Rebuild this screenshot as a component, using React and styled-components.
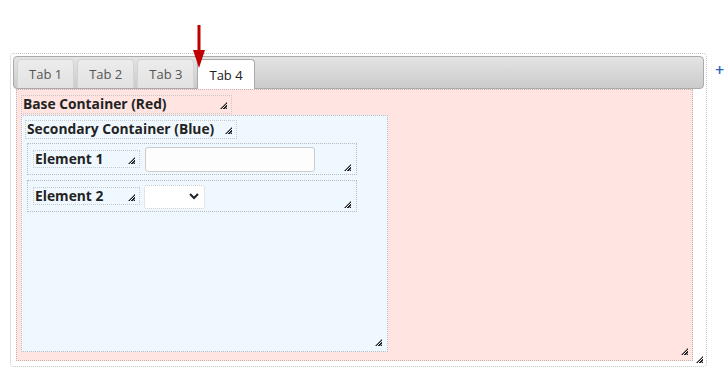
import styled, { createGlobalStyle, css } from "styled-components";

const GlobalStyle = createGlobalStyle`
  html, body {
    margin: 0;
    background: #fff;
    font-family: "Open Sans", "Liberation Sans", sans-serif;
  }
`;

//asa de redimensionar (esquina inferior derecha)
const grip = css`
  &::after {
    content: "";
    position: absolute;
    right: ${(props) => props.gr ?? 4}px;
    bottom: ${(props) => props.gb ?? 4}px;
    width: 7px;
    height: 7px;
    background: repeating-linear-gradient(
      -45deg,
      #222 0 1px,
      #aaa 1px 1.5px,
      transparent 1.5px 2px
    );
    clip-path: polygon(100% 0, 100% 100%, 0 100%);
  }
`;

//Estructura de la pagina
const Page = styled.div`
  position: relative;
  display: flex;
  align-items: flex-start;
  padding: 53px 0 0 10px;
  height: 380px;
  box-sizing: border-box;
`;

const Arrow = styled.svg`
  position: absolute;
  left: 192px;
  top: 25px;
  z-index: 2;
`;

const Tabs = styled.div`
  position: relative;
  box-sizing: border-box;
  width: 697px;
  height: 314px;
  border: 1px dotted #c4c4c4;
  border-radius: 4px;
  padding: 2px;
  ${grip}
`;

const TabBar = styled.ul`
  display: flex;
  align-items: flex-end;
  gap: 3px;
  box-sizing: border-box;
  height: 33px;
  margin: 0;
  padding: 0 3px;
  list-style: none;
  border: 1px solid #aaa;
  border-radius: 4px;
  background: linear-gradient(#e4e4e4, #cbcbcb);
`;

const Tab = styled.li`
  box-sizing: border-box;
  height: ${(props) => (props.active ? "30px" : "29px")};
  margin-bottom: ${(props) => (props.active ? "-1px" : "0")};
  padding: 0 11px;
  display: flex;
  align-items: center;
  font-size: 13px;
  color: ${(props) => (props.active ? "#212121" : "#555")};
  background: ${(props) =>
    props.active ? "#fff" : "linear-gradient(#ececec, #e2e2e2)"};
  border: 1px solid ${(props) => (props.active ? "#aaa" : "#d3d3d3")};
  border-bottom: 0;
  border-radius: 4px 4px 0 0;
`;

const Panel = styled.div`
  position: relative;
  box-sizing: border-box;
  display: flex;
  flex-direction: column;
  align-items: flex-start;
  gap: 1px;
  width: 677px;
  height: 272px;
  margin-left: 3px;
  padding: 5px 0 0 4px;
  background: #ffe4e1;
  border: 1px dotted #c4b4b2;
  ${grip}
`;

const Label = styled.div`
  position: relative;
  box-sizing: border-box;
  width: ${(props) => props.w}px;
  height: ${(props) => props.h}px;
  padding-left: 1px;
  border: 1px dotted #c8c8c8;
  font-size: 13.8px;
  font-weight: 700;
  line-height: ${(props) => props.h - 3}px;
  color: #222;
  white-space: nowrap;
  ${grip}
`;

const Secondary = styled.div`
  position: relative;
  box-sizing: border-box;
  display: flex;
  flex-direction: column;
  align-items: flex-start;
  gap: 4px;
  width: 367px;
  height: 237px;
  padding: 4px 0 0 3px;
  background: #f0f8ff;
  border: 1px dotted #bbb;
  ${grip}
`;

const RowList = styled.div`
  display: flex;
  flex-direction: column;
  gap: 5px;
  padding-left: 2px;
`;

const Row = styled.div`
  position: relative;
  box-sizing: border-box;
  display: flex;
  align-items: center;
  gap: 5px;
  width: 330px;
  height: 32px;
  padding-left: 5px;
  border: 1px dotted #bbb;
  ${grip}
`;

const TextInput = styled.input`
  box-sizing: border-box;
  width: 170px;
  height: 25px;
  border: 1px solid #ccc;
  border-radius: 3px;
  background: #fdfdfd;
`;

const SelectWrap = styled.div`
  position: relative;
  width: 61px;
  height: 24px;
  margin-left: -1px;
`;

const Select = styled.select`
  box-sizing: border-box;
  width: 100%;
  height: 100%;
  appearance: none;
  border: 1px dotted #ccc;
  border-radius: 3px;
  background: #fff;
`;

const Chevron = styled.svg`
  position: absolute;
  right: 6px;
  top: 9px;
  pointer-events: none;
`;

const Plus = styled.span`
  margin: 9px 0 0 8px;
  font-size: 16px;
  font-weight: 600;
  line-height: 16px;
  color: #2a64b8;
`;

function App() {
  const tabs = ["Tab 1", "Tab 2", "Tab 3", "Tab 4"];
  const elements = ["Element 1", "Element 2"];
  return (
    <>
      <GlobalStyle />
      <Page>
        <Arrow width="14" height="44" viewBox="0 0 14 44">
          <rect x="5.5" y="0" width="3" height="30" fill="#c00000" />
          <polygon points="1,25 13,25 7,43" fill="#c00000" />
        </Arrow>
        <Tabs gr={3} gb={3}>
          <TabBar>
            {tabs.map((t, i) => (
              <Tab key={t} active={i === 3}>
                {t}
              </Tab>
            ))}
          </TabBar>
          <Panel gr={4} gb={5}>
            <Label w={211} h={19}>
              Base Container (Red)
            </Label>
            <Secondary gr={5} gb={5}>
              <Label w={212} h={19}>
                Secondary Container (Blue)
              </Label>
              <RowList>
                {elements.map((name, i) => (
                  <Row key={name} gr={5} gb={3}>
                    <Label w={107} h={18} gb={3}>
                      {name}
                    </Label>
                    {i === 0 ? (
                      <TextInput />
                    ) : (
                      <SelectWrap>
                        <Select defaultValue="">
                          <option value=""></option>
                        </Select>
                        <Chevron width="10" height="7" viewBox="0 0 10 7">
                          <path
                            d="M1 1 L5 5 L9 1"
                            stroke="#222"
                            strokeWidth="2"
                            fill="none"
                          />
                        </Chevron>
                      </SelectWrap>
                    )}
                  </Row>
                ))}
              </RowList>
            </Secondary>
          </Panel>
        </Tabs>
        <Plus>+</Plus>
      </Page>
    </>
  );
}

export default App;
